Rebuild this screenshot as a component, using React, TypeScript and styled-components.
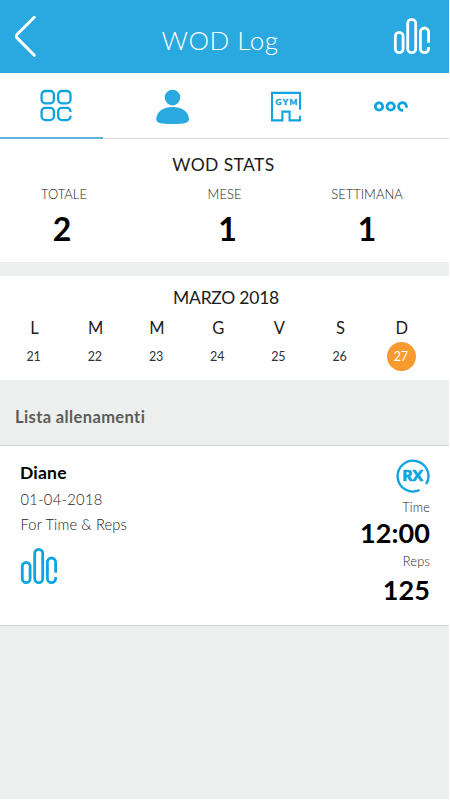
import React from "react";
import styled, { createGlobalStyle } from "styled-components";

const BLUE = "#29a9df";
const ICON = "#0fa4df";

const GlobalStyle = createGlobalStyle`
  * { box-sizing: border-box; }
  body {
    margin: 0;
    background: #fff;
    font-family: Lato, "Open Sans", sans-serif;
    font-variant-ligatures: none;
    color: #000;
  }
`;

const Screen = styled.div`
  width: 449px;
  height: 799px;
  background: #edefee;
  display: flex;
  flex-direction: column;
  overflow: hidden;
`;

const Header = styled.header`
  height: 73px;
  flex: none;
  background: ${BLUE};
  color: #fff;
  display: grid;
  grid-template-columns: 60px 1fr 60px;
`;

const Back = styled.button`
  border: 0;
  padding: 15px 0 0 14px;
  background: none;
  display: flex;
  align-items: flex-start;
`;

const Title = styled.h1`
  margin: 0;
  padding: 24px 9px 0 0;
  text-align: center;
  font-size: 26px;
  line-height: 32px;
  font-weight: 300;
  letter-spacing: 0.5px;
  white-space: nowrap;
`;

const HeaderLogo = styled.div`
  padding: 17px 0 0 3.5px;
`;

const Tabs = styled.nav`
  height: 66px;
  flex: none;
  background: #fff;
  border-bottom: 1px solid #d5d5d5;
  display: grid;
  grid-template-columns: 103px 138px 90px 118px;
`;

const Tab = styled.button<{ $active?: boolean; $top: number; $left: number }>`
  border: 0;
  background: none;
  height: 66px;
  padding: ${(p) => p.$top}px 0 0 ${(p) => p.$left}px;
  display: flex;
  align-items: flex-start;
  border-bottom: ${(p) => (p.$active ? "2px solid #5cb4e0" : "0")};
`;

const Panel = styled.section<{ $height: number }>`
  height: ${(p) => p.$height}px;
  flex: none;
  background: #fff;
`;

const PanelTitle = styled.h2<{ $top: number; $spacing: number; $left?: number; $right?: number }>`
  margin: 0;
  padding: ${(p) => p.$top}px ${(p) => p.$right ?? 0}px 0 ${(p) => p.$left ?? 0}px;
  text-align: center;
  font-size: 17.5px;
  line-height: 22px;
  font-weight: 400;
  color: #1c1c1c;
  letter-spacing: ${(p) => p.$spacing}px;
`;

const Stats = styled.div`
  display: grid;
  grid-template-columns: 128px 193px 92px;
  padding-top: 10px;
`;

const Stat = styled.div`
  display: flex;
  flex-direction: column;
  align-items: center;
`;

const StatLabel = styled.span`
  font-size: 13px;
  line-height: 16px;
  font-weight: 300;
  color: #222;
`;

const StatValue = styled.strong<{ $shift: number }>`
  font-size: 32px;
  line-height: 40px;
  font-weight: 700;
  margin: 7px 0 0 ${(p) => p.$shift}px;
`;

const Gap = styled.div`
  height: 14px;
  flex: none;
`;

const Week = styled.div`
  display: grid;
  grid-template-columns: repeat(7, 61.2px);
  padding: 7px 0 0 4px;
`;

const Day = styled.div`
  display: flex;
  flex-direction: column;
  align-items: center;
`;

const DayName = styled.span`
  font-size: 16.5px;
  line-height: 24px;
  color: #1c1c1c;
`;

const DayNumber = styled.span<{ $selected: boolean }>`
  width: 29px;
  height: 29px;
  border-radius: 50%;
  margin-top: 2px;
  padding-right: 2px;
  text-align: center;
  font-size: 12.5px;
  line-height: 30px;
  letter-spacing: -0.2px;
  background: ${(p) => (p.$selected ? "#f79a30" : "transparent")};
  color: ${(p) => (p.$selected ? "#fff" : "#333")};
`;

const ListTitle = styled.h3`
  margin: 0;
  height: 66px;
  flex: none;
  padding: 26px 0 0 15px;
  font-size: 16.5px;
  line-height: 22px;
  font-weight: 700;
  letter-spacing: 0.38px;
  color: #5c5c5c;
  border-bottom: 1px solid #d3d3d3;
`;

const Card = styled.article`
  height: 179px;
  flex: none;
  background: #fff;
  box-shadow: 0 1px 0 #d6d7d7;
  display: flex;
  justify-content: space-between;
  padding: 0 19px 0 20px;
`;

const CardInfo = styled.div`
  display: flex;
  flex-direction: column;
  padding-top: 15px;
`;

const Name = styled.h4`
  margin: 0 0 2px;
  font-size: 17.5px;
  line-height: 24px;
  font-weight: 700;
  letter-spacing: 0.2px;
`;

const Detail = styled.span<{ $spacing: number }>`
  padding-left: 0.5px;
  font-size: 14.7px;
  line-height: 25px;
  color: #222;
  font-weight: 300;
  letter-spacing: ${(p) => p.$spacing}px;
`;

const CardLogo = styled.div`
  padding-top: 10px;
  margin-left: -0.5px;
`;

const Results = styled.div`
  display: flex;
  flex-direction: column;
  align-items: flex-end;
  padding-top: 13px;
`;

const Badge = styled.div`
  height: 40px;
`;

const ResultLabel = styled.span`
  font-size: 12.8px;
  line-height: 16px;
  font-weight: 300;
  color: #222;
  letter-spacing: 0.15px;
`;

const ResultValue = styled.strong<{ $top: number; $bottom: number }>`
  font-size: 27px;
  line-height: 32px;
  font-weight: 700;
  margin: ${(p) => p.$top}px 0 ${(p) => p.$bottom}px;
  letter-spacing: 0.1px;
`;

const BarsLogo = ({ color }: { color: string }) => (
  <svg width="38" height="38" viewBox="0 0 38 38" fill="none" stroke={color} strokeWidth="2.8">
    <rect x="2.3" y="15.3" width="7.8" height="20.4" rx="3.9" />
    <rect x="14.7" y="2.3" width="8" height="33.4" rx="4" />
    <path d="M35.6 25.8V15.1a4 4 0 0 0-8.2 0v16.5a4.1 4.1 0 0 0 8.2 0v-1.6" />
  </svg>
);

const BackIcon = () => (
  <svg width="24" height="44" viewBox="0 0 24 44" fill="none" stroke="#fff" strokeWidth="3" strokeLinecap="round" strokeLinejoin="round">
    <path d="M20.3 2.3 3.5 19q-2.2 2.2 0 4.4L20.3 40.3" />
  </svg>
);

const GridIcon = () => (
  <svg width="34" height="34" viewBox="0 0 34 34" fill="none" stroke={ICON} strokeWidth="2.3">
    <rect x="2.6" y="2" width="12.3" height="12.3" rx="3.8" />
    <rect x="19.2" y="2" width="12.3" height="12.3" rx="3.8" />
    <rect x="2.6" y="18.8" width="12.3" height="12.3" rx="3.8" />
    <path d="M31.5 23v-.6a3.6 3.6 0 0 0-3.600-3.600h-5.100a3.600 3.600 0 0 0-3.600 3.600v5.100a3.600 3.600 0 0 0 3.600 3.600h5.100a3.600 3.600 0 0 0 3.600-3.600v-.8" />
  </svg>
);

const PersonIcon = () => (
  <svg width="34" height="36" viewBox="0 0 34 36" fill={BLUE}>
    <circle cx="16.5" cy="8.6" r="7.8" />
    <path d="M.2 30C.7 22 7.700 17.900 16.600 17.900S32.500 22 33 30c0 4-4 5-16.400 5S.2 34 .2 30Z" />
  </svg>
);

const GymText = styled.text`
  font: 900 8.2px Lato, sans-serif;
`;

const GymIcon = () => (
  <svg width="32" height="32" viewBox="0 0 32 32">
    <path d="M30 18.8V1.9H2V29.4H12.4V20.6H19.6V29.4H30V24.8" fill="none" stroke={ICON} strokeWidth="2.1" />
    <GymText x="5.6" y="14" textLength="21.6" fill={ICON} stroke={ICON} strokeWidth="0.4">GYM</GymText>
  </svg>
);

const DotsIcon = () => (
  <svg width="36" height="14" viewBox="0 0 36 14" fill="none" stroke={ICON} strokeWidth="2.8">
    <circle cx="6" cy="7.5" r="3.7" />
    <circle cx="17.7" cy="7.5" r="3.7" />
    <path d="M33.2 8.700a3.900 3.900 0 1 0-3 2.600" />
  </svg>
);

const RxText = styled.text`
  font: 900 15px Lato, sans-serif;
`;

const RxIcon = () => (
  <svg width="34" height="34" viewBox="0 0 34 34">
    <path d="M30.1 25.200A15.400 15.400 0 1 0 23.600 31" fill="none" stroke={ICON} strokeWidth="2.4" />
    <RxText x="6.600" y="22.300" textLength="20.400" lengthAdjust="spacingAndGlyphs" fill={ICON} stroke={ICON} strokeWidth="0.7" strokeLinejoin="round">RX</RxText>
  </svg>
);

const stats = [
  { label: "TOTALE", value: "2", shift: -4 },
  { label: "MESE", value: "1", shift: 6 },
  { label: "SETTIMANA", value: "1", shift: 0 },
];

const days: [string, number][] = [
  ["L", 21], ["M", 22], ["M", 23], ["G", 24], ["V", 25], ["S", 26], ["D", 27],
];

export default function App() {
  return (
    <>
      <GlobalStyle />
      <Screen>
        <Header>
          <Back aria-label="Indietro"><BackIcon /></Back>
          <Title>WOD Log</Title>
          <HeaderLogo><BarsLogo color="#fff" /></HeaderLogo>
        </Header>
        <Tabs>
          <Tab $active $top={16} $left={39}><GridIcon /></Tab>
          <Tab $top={16} $left={53}><PersonIcon /></Tab>
          <Tab $top={18} $left={29}><GymIcon /></Tab>
          <Tab $top={26} $left={42}><DotsIcon /></Tab>
        </Tabs>
        <Panel $height={123}>
          <PanelTitle $top={15} $spacing={0.4} $right={2}>WOD STATS</PanelTitle>
          <Stats>
            {stats.map((s) => (
              <Stat key={s.label}>
                <StatLabel>{s.label}</StatLabel>
                <StatValue $shift={s.shift}>{s.value}</StatValue>
              </Stat>
            ))}
          </Stats>
        </Panel>
        <Gap />
        <Panel $height={104}>
          <PanelTitle $top={11} $spacing={-0.25} $left={3}>MARZO 2018</PanelTitle>
          <Week>
            {days.map(([name, n]) => (
              <Day key={n}>
                <DayName>{name}</DayName>
                <DayNumber $selected={n === 27}>{n}</DayNumber>
              </Day>
            ))}
          </Week>
        </Panel>
        <ListTitle>Lista allenamenti</ListTitle>
        <Card>
          <CardInfo>
            <Name>Diane</Name>
            <Detail $spacing={0.3}>01-04-2018</Detail>
            <Detail $spacing={0.15}>For Time &amp; Reps</Detail>
            <CardLogo><BarsLogo color={ICON} /></CardLogo>
          </CardInfo>
          <Results>
            <Badge><RxIcon /></Badge>
            <ResultLabel>Time</ResultLabel>
            <ResultValue $top={2} $bottom={4}>12:00</ResultValue>
            <ResultLabel>Reps</ResultLabel>
            <ResultValue $top={5} $bottom={0}>125</ResultValue>
          </Results>
        </Card>
      </Screen>
    </>
  );
}
